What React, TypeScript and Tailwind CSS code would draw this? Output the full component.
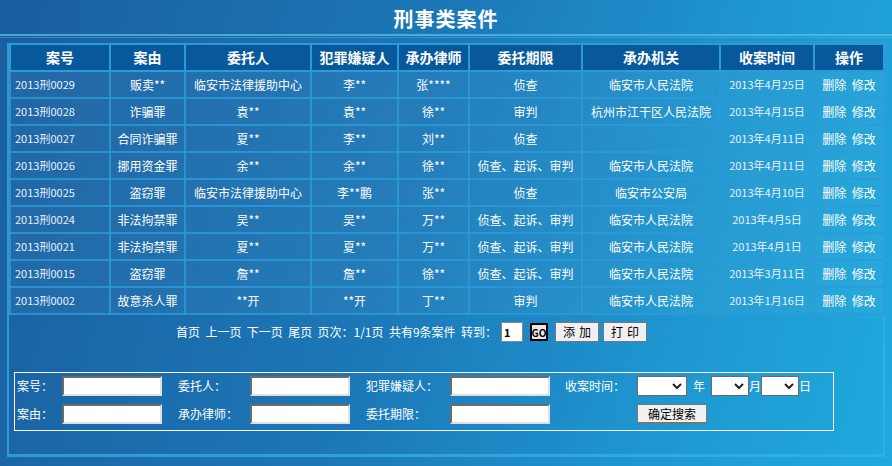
import React from 'react'

const cols = [
  { name: '案号', w: 100 },
  { name: '案由', w: 75 },
  { name: '委托人', w: 126 },
  { name: '犯罪嫌疑人', w: 87 },
  { name: '承办律师', w: 71 },
  { name: '委托期限', w: 113 },
  { name: '承办机关', w: 138 },
  { name: '收案时间', w: 94 },
  { name: '操作', w: 70 },
]

const rows = [
  ['2013刑0029', '贩卖**', '临安市法律援助中心', '李**', '张****', '侦查', '临安市人民法院', '2013年4月25日'],
  ['2013刑0028', '诈骗罪', '袁**', '袁**', '徐**', '审判', '杭州市江干区人民法院', '2013年4月15日'],
  ['2013刑0027', '合同诈骗罪', '夏**', '李**', '刘**', '侦查', '', '2013年4月11日'],
  ['2013刑0026', '挪用资金罪', '余**', '余**', '徐**', '侦查、起诉、审判', '临安市人民法院', '2013年4月11日'],
  ['2013刑0025', '盗窃罪', '临安市法律援助中心', '李**鹏', '张**', '侦查', '临安市公安局', '2013年4月10日'],
  ['2013刑0024', '非法拘禁罪', '吴**', '吴**', '万**', '侦查、起诉、审判', '临安市人民法院', '2013年4月5日'],
  ['2013刑0021', '非法拘禁罪', '夏**', '夏**', '万**', '侦查、起诉、审判', '临安市人民法院', '2013年4月1日'],
  ['2013刑0015', '盗窃罪', '詹**', '詹**', '徐**', '侦查、起诉、审判', '临安市人民法院', '2013年3月11日'],
  ['2013刑0002', '故意杀人罪', '**开', '**开', '丁**', '审判', '临安市人民法院', '2013年1月16日'],
]

function Field({ label, lw }: { label: string; lw: string }) {
  return (
    <div className="flex items-center">
      <span className={`${lw} text-white`}>{label}</span>
      <input className="w-[100px] h-[20px] bg-white border-2 border-t-[#6b6b6b] border-l-[#6b6b6b] border-b-[#e0e0e0] border-r-[#e0e0e0]" />
    </div>
  )
}

function Sel({ w }: { w: string }) {
  return (
    <div className={`${w} h-[20px] bg-white border border-[#6b6b6b] flex items-center justify-end pr-1`}>
      <svg width="10" height="7" viewBox="0 0 10 7">
        <path d="M1 1 L5 5 L9 1" stroke="#222" strokeWidth="2" fill="none" />
      </svg>
    </div>
  )
}

export default function App() {
  return (
    <div
      className="w-[892px] h-[466px] overflow-hidden bg-[linear-gradient(105deg,#1a5e9f_0%,#1c78b8_45%,#1e96d0_75%,#20aade_100%)] text-[12px] text-white"
      style={{ fontFamily: '"Noto Sans CJK SC", "Noto Sans", sans-serif' }}
    >
      <div className="h-[34px] flex items-center justify-center">
        <h1 className="text-[20px] font-bold leading-none tracking-[1px] mt-[4px]">刑事类案件</h1>
      </div>
      <div className="h-[2px] bg-[#5cc0ec]/70" />
      <div className="h-[1px] mt-[1px] bg-[#5cc0ec]/40" />

      <div className="mx-[7px] mt-[5px] h-[414px] border-l-2 border-r-2 border-b-[3px] border-[#3ab0e8]/70">
        <table className="border-collapse table-fixed w-[876px]">
          <thead>
            <tr className="h-[27px]">
              {cols.map((c) => (
                <th
                  key={c.name}
                  style={{ width: c.w }}
                  className="bg-[#07599b] border-2 border-[#2c9bd8] text-[14px] font-bold p-0"
                >
                  {c.name}
                </th>
              ))}
            </tr>
          </thead>
          <tbody>
            {rows.map((r) => (
              <tr key={r[0]} className="h-[27px]">
                {r.map((v, i) => (
                  <td
                    key={i}
                    className={`border-2 border-[#2c9bd8]/80 bg-white/[0.04] p-0 whitespace-nowrap ${i === 0 ? 'text-left pl-[4px] text-[11px] text-[#e8f2ff]' : 'text-center'} ${i === 7 ? 'text-[11px] text-[#e8f2ff]' : ''}`}
                  >
                    {v}
                  </td>
                ))}
                <td className="border-2 border-[#2c9bd8]/80 bg-white/[0.04] p-0 text-center">
                  删除&nbsp;&nbsp;修改
                </td>
              </tr>
            ))}
          </tbody>
        </table>

        <div className="flex items-center gap-[4px] mt-[6px] ml-[167px] h-[22px]">
          <span>首页&nbsp;&nbsp;上一页&nbsp;&nbsp;下一页&nbsp;&nbsp;尾页&nbsp;&nbsp;页次：1/1页&nbsp;&nbsp;共有9条案件&nbsp;&nbsp;转到：</span>
          <div className="w-[22px] h-[20px] bg-white border border-[#888] text-black text-[11px] font-bold pl-[2px] leading-[18px]">1</div>
          <div className="ml-[3px] w-[18px] h-[18px] bg-[#e8e8e8] border-2 border-black text-black text-[10px] font-bold flex items-center justify-center">GO</div>
          <button className="ml-[3px] w-[44px] h-[20px] bg-[#f0f0f0] border border-[#777] text-black text-[12px] tracking-[4px] pl-[4px]">添加</button>
          <button className="w-[44px] h-[20px] bg-[#f0f0f0] border border-[#777] text-black text-[12px] tracking-[4px] pl-[4px]">打印</button>
        </div>

        <div className="mt-[29px] ml-[5px] w-[820px] h-[59px] border border-white px-[2px] py-[3px] flex flex-col gap-[8px]">
          <div className="flex items-center h-[20px]">
            <Field label="案号：" lw="w-[45px]" />
            <div className="ml-[16px]"><Field label="委托人：" lw="w-[72px]" /></div>
            <div className="ml-[16px]"><Field label="犯罪嫌疑人：" lw="w-[84px]" /></div>
            <span className="ml-[15px] w-[72px]">收案时间：</span>
            <Sel w="w-[50px]" />
            <span className="ml-[6px] mr-[6px]">年</span>
            <Sel w="w-[38px]" />
            <span>月</span>
            <Sel w="w-[38px]" />
            <span>日</span>
          </div>
          <div className="flex items-center h-[20px]">
            <Field label="案由：" lw="w-[45px]" />
            <div className="ml-[16px]"><Field label="承办律师：" lw="w-[72px]" /></div>
            <div className="ml-[16px]"><Field label="委托期限：" lw="w-[84px]" /></div>
            <button className="ml-[87px] w-[70px] h-[20px] bg-[#f0f0f0] border border-[#777] border-b-2 text-black text-[12px]">确定搜索</button>
          </div>
        </div>
      </div>
    </div>
  )
}
